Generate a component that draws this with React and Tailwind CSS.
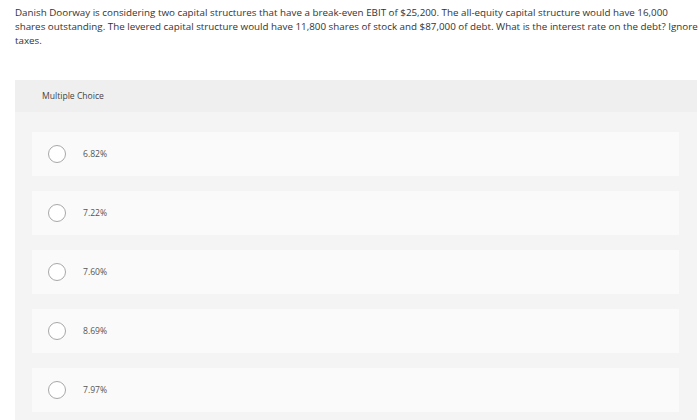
import React from 'react';

const options = ['6.82%', '7.22%', '7.60%', '8.69%', '7.97%'];

const App = () => {
  return (
    <div className="w-[700px] h-[420px] overflow-hidden bg-white font-['Open_Sans',sans-serif] text-[#333]">
      {/* Question text */}
      <p className="pl-[15px] pt-[6px] text-[9.8px] leading-[14px] whitespace-nowrap">
        Danish Doorway is considering two capital structures that have a break-even EBIT of $25,200. The all-equity capital structure would have 16,000
        <br />
        shares outstanding. The levered capital structure would have 11,800 shares of stock and $87,000 of debt. What is the interest rate on the debt? Ignore
        <br />
        taxes.
      </p>

      {/* Answer panel */}
      <div className="ml-[15px] mr-[3px] mt-[32px] bg-[#f4f4f4]">
        <div className="h-[32px] flex items-center pl-[27px] bg-[#efefef] text-[8.6px] text-[#444]">
          Multiple Choice
        </div>
        <div className="pt-[20px] pl-[17px] pr-[18px] pb-[8px] flex flex-col gap-[15px]">
          {options.map((opt) => (
            <div key={opt} className="h-[44px] flex items-center bg-[#fafafa]">
              <span className="ml-[16px] w-[18px] h-[18px] rounded-full border border-[#a8a8a8] bg-white" />
              <span className="ml-[17px] text-[8.6px] text-[#555]">{opt}</span>
            </div>
          ))}
        </div>
      </div>
    </div>
  );
};

export default App;
